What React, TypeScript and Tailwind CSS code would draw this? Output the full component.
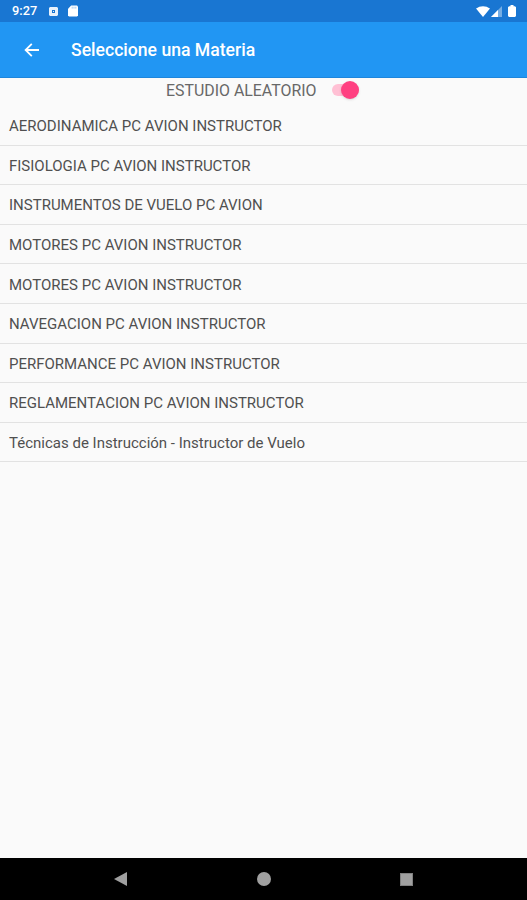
import React from 'react';

const subjects = [
    'AERODINAMICA PC AVION INSTRUCTOR',
    'FISIOLOGIA PC AVION INSTRUCTOR',
    'INSTRUMENTOS DE VUELO PC AVION',
    'MOTORES PC AVION INSTRUCTOR',
    'MOTORES PC AVION INSTRUCTOR',
    'NAVEGACION PC AVION INSTRUCTOR',
    'PERFORMANCE PC AVION INSTRUCTOR',
    'REGLAMENTACION PC AVION INSTRUCTOR',
    'Técnicas de Instrucción - Instructor de Vuelo',
];

// --- Bars ---

const StatusBar = () => (
    <div className="flex h-[22px] shrink-0 items-center bg-[#1976d2] pl-3 pr-[11px] text-white">
        <span className="w-[26px] text-[12.8px] leading-none font-medium">9:27</span>
        <svg viewBox="0 0 9 9" className="ml-[11px] h-[9px] w-[9px]">
            <path fillRule="evenodd" fill="#e8f1fb" d="M1 0H8L9 1V8L8 9H1L0 8V1ZM3 3V6H6V3Z" />
            <rect x="4" y="4" width="1" height="1" fill="#e8f1fb" />
        </svg>
        <svg viewBox="0 0 10 12" className="ml-[10px] h-3 w-[10px]">
            <path fill="#fff" d="M3.2 0.5H9L10 1.5V10.5L9 11.5H1L0 10.5V3.7Z" />
            <path stroke="#8dbbea" strokeWidth="0.8" d="M4.2 1.7V3.6M6 1.7V3.6M7.8 1.7V3.6" />
        </svg>
        <svg viewBox="0 0 14 11" className="ml-auto h-[11px] w-[14px]">
            <path fill="#fff" d="M0 2.6C4 -0.7 10 -0.7 14 2.6L7 11Z" />
        </svg>
        <svg viewBox="0 0 11 11" className="ml-[1px] h-[11px] w-[11px]">
            <path fill="#75ade4" d="M0 11L11 0V11Z" />
            <path fill="#fff" d="M0 11L7 4V11Z" />
        </svg>
        <svg viewBox="0 0 8 12" className="ml-[6px] h-3 w-2">
            <path fill="#fff" d="M2.5 0H5.5V1.3H7L8 2.3V11L7 12H1L0 11V2.3L1 1.3H2.5Z" />
        </svg>
    </div>
);

const AppBar = () => (
    <header className="flex h-14 shrink-0 items-center border-b border-[#1e86dc] bg-[#2196f3] pl-[24px] text-white">
        <svg viewBox="0 0 15 14" className="h-[14px] w-[15px]" fill="none" stroke="#fff" strokeWidth="1.8">
            <path d="M15 7H1.8M7.8 0.8L1.6 7L7.8 13.2" />
        </svg>
        <h1 className="ml-8 pt-[3px] text-[17.6px] leading-none font-medium">Seleccione una Materia</h1>
    </header>
);

const NavigationBar = () => (
    <nav className="flex h-[42px] shrink-0 items-center bg-black pl-[114px]">
        <svg viewBox="0 0 13 14" className="h-[14px] w-[13px]">
            <path fill="#a0a0a0" d="M13 0V14L0 7Z" />
        </svg>
        <div className="ml-[130px] h-[14px] w-[14px] rounded-full bg-[#a0a0a0]" />
        <div className="ml-[129px] h-[13px] w-[13px] bg-[#a0a0a0] outline outline-[#808080] -outline-offset-1" />
    </nav>
);

// --- Content ---

const RandomStudySwitch = () => (
    <div className="flex h-[28px] items-center pb-[2px] pl-[166px] text-[15.9px] leading-none text-[#686868]">
        <span className="w-[150px] whitespace-nowrap">ESTUDIO ALEATORIO</span>
        <div className="ml-4 mb-[2px] flex h-[12px] w-[27px] items-center justify-end rounded-full bg-[#ffc0d4]">
            <div className="h-[18px] w-[18px] shrink-0 rounded-full bg-[#ff4081] shadow-sm" />
        </div>
    </div>
);

const App = () => {
    return (
        <div className="flex h-[900px] w-full flex-col bg-[#fafafa] font-[Roboto,sans-serif]">
            <StatusBar />
            <AppBar />
            <main className="flex-1">
                <RandomStudySwitch />
                <ul>
                    {subjects.map((subject, index) => (
                        <li
                            key={index}
                            className="flex h-[39.6px] items-center border-b border-[#e2e2e2] pt-[3px] pl-[9px] text-[15px] leading-none text-[#505050]"
                        >
                            {subject}
                        </li>
                    ))}
                </ul>
            </main>
            <NavigationBar />
        </div>
    );
};

export default App;
